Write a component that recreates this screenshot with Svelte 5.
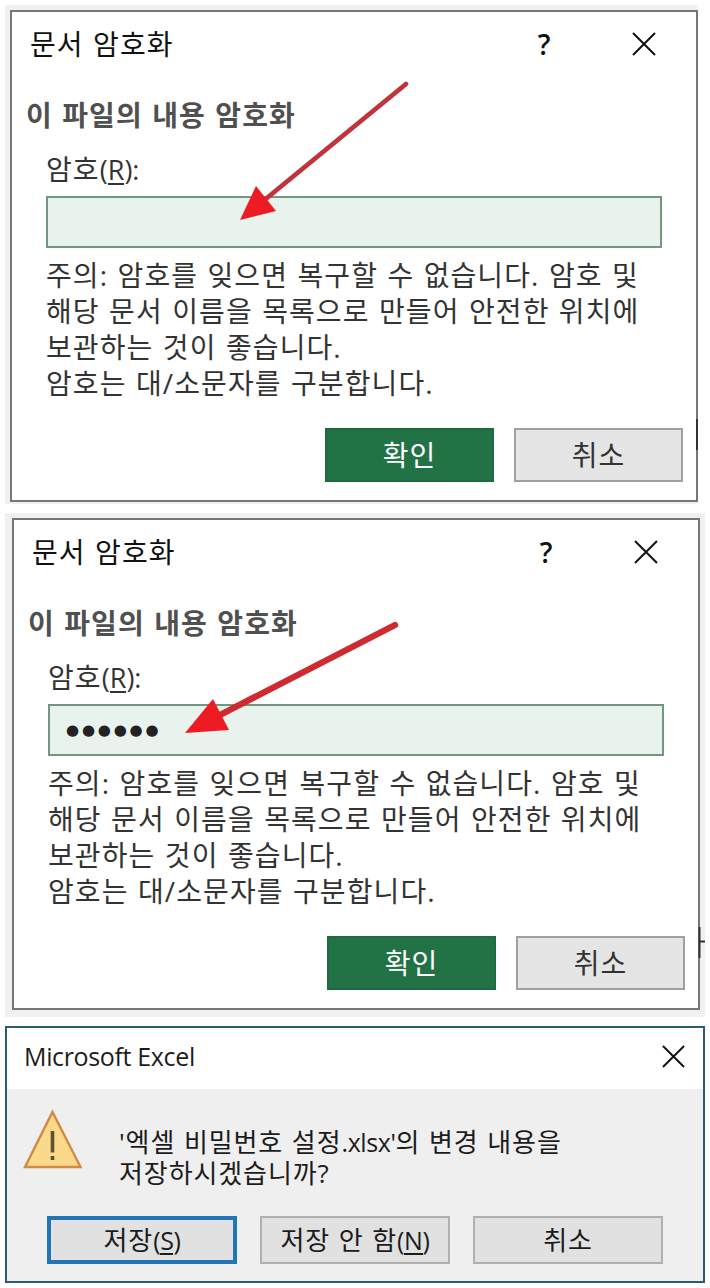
<script>
    const noteLines = [
        "주의: 암호를 잊으면 복구할 수 없습니다. 암호 및",
        "해당 문서 이름을 목록으로 만들어 안전한 위치에",
        "보관하는 것이 좋습니다.",
        "암호는 대/소문자를 구분합니다.",
    ];

    const steps = [
        {
            name: "first",
            typed: 0,
            line: "M406 84 L262 202",
            head: "240,220 256,186 276,211",
            top: 5,
            stroke: 4.8,
            color: "#c0343b",
            mark: "M692 414 V445",
        },
        {
            name: "second",
            typed: 6,
            line: "M395 625 L218 716",
            head: "185,733 213,699 229,730",
            top: 513,
            stroke: 6.4,
            color: "#ce2a30",
            mark: "M694.5 414 V445 M695 428.5 H700",
        },
    ];
</script>

{#snippet cross(size)}
    <svg class="cross" width={size} height={size} viewBox="0 0 24 24">
        <path d="M1 1 L23 23 M23 1 L1 23" />
    </svg>
{/snippet}

<main>
    {#each steps as step}
        <section class="shot {step.name}">
            <div class="dialog">
                <header>
                    <span class="title">문서 암호화</span>
                    <span class="help">?</span>
                    {@render cross(24)}
                </header>
                <h2>이 파일의 내용 암호화</h2>
                <div class="content">
                    <div class="label">암호<span class="latin">(<u>R</u>):</span></div>
                    <div class="field">{"●".repeat(step.typed)}</div>
                    <div class="note">
                        {#each noteLines as text}
                            <p>{text}</p>
                        {/each}
                    </div>
                </div>
                <footer>
                    <button class="ok">확인</button>
                    <button>취소</button>
                </footer>
            </div>
            <svg class="overlay" width="700" height="504" viewBox="0 0 700 504">
                <path d={step.mark} stroke="#333" stroke-width="2" />
                <g transform="translate(-5 {-step.top})">
                    <path
                        d={step.line}
                        stroke={step.color}
                        stroke-width={step.stroke}
                        stroke-linecap="round"
                    />
                    <polygon points={step.head} fill="#ed1c24" />
                </g>
            </svg>
        </section>
    {/each}

    <section class="excel">
        <header>
            <span class="app-name">Microsoft Excel</span>
            {@render cross(23)}
        </header>
        <div class="message">
            <svg width="60" height="60" viewBox="0 0 60 60">
                <path
                    d="M29.5 3 L57.5 58 H2 Z"
                    fill="#fbd98b"
                    stroke="#d08a45"
                    stroke-width="2.4"
                />
                <path d="M29.5 22 V43.5 M29.5 47 V51" stroke="#5b5230" stroke-width="3.6" />
            </svg>
            <div class="question">
                '엑셀 비밀번호 설정<span class="latin">.xlsx'</span>의 변경 내용을<br />
                저장하시겠습니까?
            </div>
        </div>
        <footer>
            <button class="focused">저장<span class="latin">(<u>S</u>)</span></button>
            <button>저장 안 함<span class="latin">(<u>N</u>)</span></button>
            <button>취소</button>
        </footer>
    </section>
</main>

<style>
    :global(body) {
        background: #fff;
    }

    main {
        display: flex;
        flex-direction: column;
        gap: 9px;
        width: 700px;
        padding: 5px 5px 0;
        font-family: "Open Sans", "Noto Sans CJK KR", sans-serif;
        font-size: 28px;
        letter-spacing: 1.1px;
        word-spacing: 1px;
        color: #333;
    }

    p,
    h2 {
        margin: 0;
    }

    .latin {
        font-size: 27px;
        letter-spacing: 0;
    }

    u {
        display: inline-block;
        line-height: 26px;
        text-decoration: none;
        border-bottom: 2px solid currentColor;
    }

    .shot {
        position: relative;
        box-sizing: border-box;
        padding: 5px 0 0 5px;
        background: #f1f1f1;
    }

    .first {
        width: 693px;
        height: 499px;
    }

    .second {
        height: 504px;
        padding-left: 7px;
    }

    .dialog {
        box-sizing: border-box;
        width: 688px;
        height: 492px;
        border: 2px solid #777;
        background: #fff;
    }

    .dialog header {
        display: flex;
        align-items: center;
        height: 64px;
        padding: 0 40px 0 18px;
        color: #111;
    }

    .title {
        flex: 1;
        padding-bottom: 2px;
    }

    .help {
        width: 24px;
        margin-right: 76px;
        font-size: 28px;
        font-weight: 600;
        letter-spacing: 0;
        text-align: center;
    }

    .cross path {
        stroke: #111;
        stroke-width: 2;
    }

    h2 {
        height: 36px;
        margin-top: 21px;
        padding-left: 14px;
        font-size: 28px;
        font-weight: 600;
        line-height: 36px;
        color: #505050;
    }

    .content {
        padding: 18px 34px 0 34px;
    }

    .label {
        height: 45px;
        line-height: 36px;
    }

    .field {
        box-sizing: border-box;
        height: 52px;
        padding-left: 16px;
        border: 2px solid #719780;
        background: #e8f3ed;
        font-family: "DejaVu Sans", sans-serif;
        font-size: 15px;
        line-height: 48px;
        letter-spacing: 2.8px;
        color: #222;
    }

    .note {
        padding-top: 9px;
    }

    .note p {
        height: 36px;
        line-height: 36px;
        white-space: nowrap;
    }

    .dialog footer {
        display: flex;
        justify-content: flex-end;
        gap: 20px;
        margin-top: 27px;
        padding-right: 13px;
    }

    button {
        box-sizing: border-box;
        width: 169px;
        height: 54px;
        padding: 0 0 2px;
        border: 2px solid #a0a0a0;
        border-radius: 0;
        background: #e5e5e5;
        font: inherit;
        letter-spacing: inherit;
        word-spacing: inherit;
        color: #333;
    }

    .ok {
        border-color: #1f6b40;
        background: #217346;
        color: #fff;
    }

    .overlay {
        position: absolute;
        top: 0;
        left: 0;
        fill: none;
    }

    .excel {
        box-sizing: border-box;
        height: 257px;
        border: 2px solid #2b5c72;
        background: #efefef;
        font-size: 26px;
        letter-spacing: 0.9px;
        color: #1c1c1c;
    }

    .excel .latin {
        font-size: 25px;
        letter-spacing: -0.4px;
    }

    .excel header {
        display: flex;
        align-items: center;
        justify-content: space-between;
        height: 61px;
        padding: 0 18px 0 17px;
        background: #fff;
    }

    .app-name {
        padding-bottom: 5px;
        font-size: 25px;
        letter-spacing: -0.35px;
        word-spacing: 0;
    }

    .excel .cross {
        margin-bottom: 5px;
    }

    .message {
        display: flex;
        height: 127px;
        padding-left: 16px;
    }

    .message svg {
        margin-top: 20px;
    }

    .question {
        margin-top: 38px;
        padding-left: 36px;
        line-height: 31px;
        white-space: nowrap;
    }

    .excel footer {
        display: flex;
        gap: 23px;
        padding-left: 40px;
    }

    .excel button {
        width: 190px;
        height: 48px;
        border-color: #b0b0b0;
        background: #e1e1e1;
        color: #1c1c1c;
    }

    .excel .focused {
        border: 4px solid #1f75b5;
    }
</style>
